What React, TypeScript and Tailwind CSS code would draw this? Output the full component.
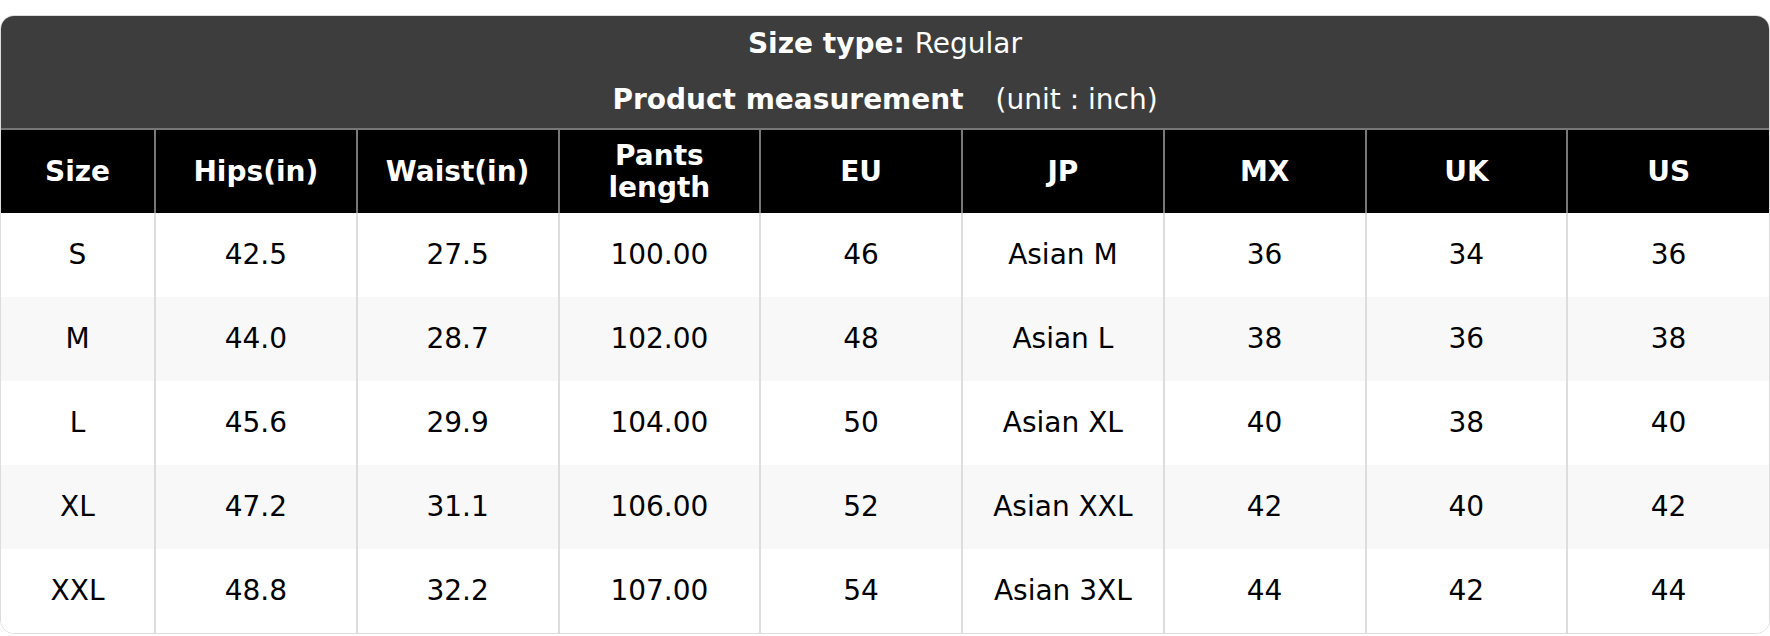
import React from "react";

const headers = ["Size", "Hips(in)", "Waist(in)", "Pants length", "EU", "JP", "MX", "UK", "US"];

const rows = [
  ["S", "42.5", "27.5", "100.00", "46", "Asian M", "36", "34", "36"],
  ["M", "44.0", "28.7", "102.00", "48", "Asian L", "38", "36", "38"],
  ["L", "45.6", "29.9", "104.00", "50", "Asian XL", "40", "38", "40"],
  ["XL", "47.2", "31.1", "106.00", "52", "Asian XXL", "42", "40", "42"],
  ["XXL", "48.8", "32.2", "107.00", "54", "Asian 3XL", "44", "42", "44"],
];

export default function App() {
  return (
    <div className="w-[1770px] h-[636px] bg-white pt-[15px] font-['DejaVu_Sans',sans-serif]">
      <div className="rounded-[14px] border border-[#dcdcdc] overflow-hidden">
        {/* Title block */}
        <div className="bg-[#3d3d3d] text-white text-center text-[28px]">
          <div className="h-[56px] flex items-center justify-center">
            <span className="font-bold">Size type:</span>
            <span className="ml-[10px]">Regular</span>
          </div>
          <div className="h-[56px] flex items-center justify-center">
            <span className="font-bold">Product measurement</span>
            <span className="ml-[32px]">(unit : inch)</span>
          </div>
        </div>

        <table className="w-full table-fixed border-collapse text-[28px] text-center">
          <colgroup>
            <col className="w-[154px]" />
            {headers.slice(1).map((h) => (
              <col key={h} />
            ))}
          </colgroup>
          <thead>
            <tr className="bg-black text-white h-[84px]">
              {headers.map((h, i) => (
                <th
                  key={h}
                  className={`font-bold leading-[32px] px-[28px] border-t-2 border-[#777] ${
                    i > 0 ? "border-l-2" : ""
                  }`}
                >
                  {h}
                </th>
              ))}
            </tr>
          </thead>
          <tbody>
            {rows.map((r, ri) => (
              <tr key={r[0]} className={`h-[84px] ${ri % 2 === 1 ? "bg-[#f8f8f8]" : "bg-white"}`}>
                {r.map((c, ci) => (
                  <td
                    key={ci}
                    className={`text-black ${ci > 0 ? "border-l-2 border-[#dddddd]" : ""}`}
                  >
                    {c}
                  </td>
                ))}
              </tr>
            ))}
          </tbody>
        </table>
      </div>
    </div>
  );
}
